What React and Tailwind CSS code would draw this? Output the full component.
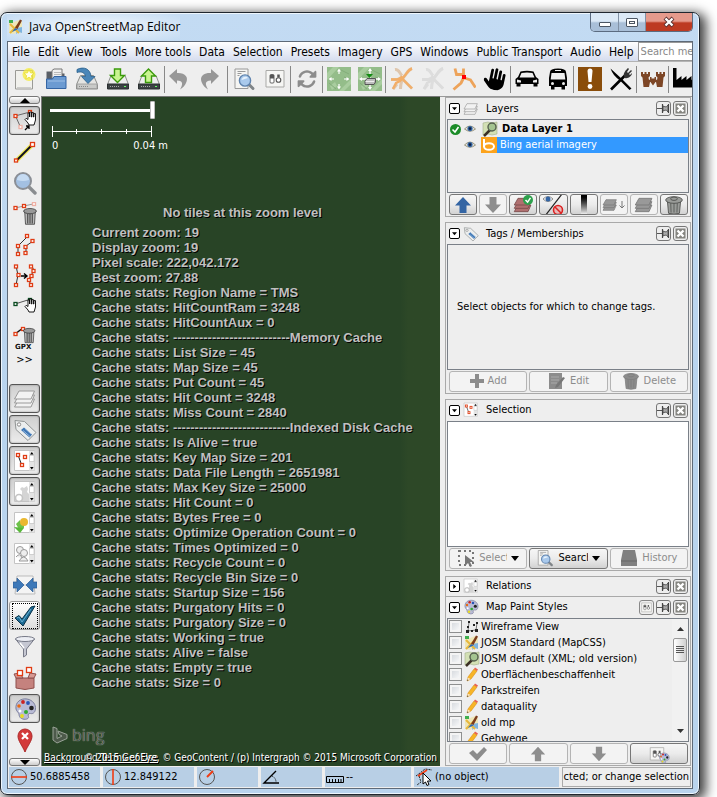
import React, { useState } from "react"
import { FaHand, FaRotate } from "react-icons/fa6"

const Svg = ({ size = 24, box = 24, children, className = "" }) => (
  <svg width={size} height={size} viewBox={`0 0 ${box} ${box}`} fill="none" className={`shrink-0 ${className}`} aria-hidden="true">
    {children}
  </svg>
)

// small red square, used for every map node
const Node = ({ x, y, c = "#e03c14", s = 3 }) => (
  <rect x={x - s / 2} y={y - s / 2} width={s} height={s} fill="#fff" stroke={c} strokeWidth="1.3" />
)

/* ---------- main toolbar icons ---------- */
const Drive = () => (
  <>
    <path d="M5.500 8.500h13l4 9v4.500h-21v-4.500z" fill="#e4e4e2" stroke="#8b8d8a" />
    <path d="M2 17h20v4.500H2z" fill="#c9cac8" stroke="#999" strokeWidth=".8" />
    <path d="M4 19.500h10" stroke="#888" strokeDasharray="1 1" />
  </>
)
const DarkDrive = () => (
  <>
    <path d="M5 8.500h14l3.500 9h-21z" fill="#eee" stroke="#8b8d8a" />
    <path d="M1.500 17h21v5h-21z" fill="#3c4244" stroke="#2b2f30" />
    <path d="M4 19.500h9" stroke="#aaa" strokeDasharray="1 1" />
    <path d="M18 19.500h2" stroke="#6f6" />
  </>
)
const IconNew = () => (
  <Svg>
    <path d="M2.500 3.500h17v18.500h-17z" fill="#f1f1ed" stroke="#9a9a96" />
    <path d="M4 20.500h14" stroke="#ccc" />
    <circle cx="16" cy="7.500" r="6.500" fill="#f6ec3a" opacity=".75" />
    <path d="M16 2.500l1.500 3.300 3.600.4-2.700 2.400.8 3.600-3.200-1.900-3.200 1.900.8-3.600-2.700-2.400 3.600-.4z" fill="#fffef0" stroke="#e8dc2b" strokeWidth=".8" />
  </Svg>
)
const IconOpen = () => (
  <Svg>
    <path d="M2.500 21V4.500h7l1.500 2h9.500V21z" fill="#5a5f66" />
    <path d="M8 12V3.500L10 2h8v10z" fill="#f0f0f0" stroke="#777" />
    <path d="M10 5.500h7M10 7.500h7M10 9.500h7" stroke="#bbb" />
    <path d="M2.500 21.500v-9.500h6l1.500-2.500h12v12z" fill="#6c9bd2" stroke="#3465a4" />
    <path d="M4 14h17" stroke="#9dbfe6" />
  </Svg>
)
const IconSave = () => (
  <Svg>
    <Drive />
    <path d="M2 2.500C9-1 15.500 2 16 9.500h4L13 16.500 6.500 9.500h4C10 6 7 4 2 5.500z" fill="#4a86b8" stroke="#2a5f8c" strokeWidth=".8" />
  </Svg>
)
const IconDownload = () => (
  <Svg>
    <DarkDrive />
    <path d="M8.500 2h6v6.500h4L11.500 15.500 4.500 8.500h4z" fill="#c9f590" stroke="#3b9a0c" strokeWidth="1.400" />
  </Svg>
)
const IconUpload = () => (
  <Svg>
    <DarkDrive />
    <path d="M8.500 15.500h6V9h4L11.500 2 4.500 9h4z" fill="#c9f590" stroke="#3b9a0c" strokeWidth="1.400" />
  </Svg>
)
const IconUndo = () => (
  <Svg><path d="M0 9L8 2v4c8-.5 12 4 9 10-1 2.500-3 4.500-6 6.500 3-5 3.500-9-3-9v3.500z" fill="#979797" /></Svg>
)
const IconRedo = () => (
  <Svg><path d="M19 9L11 2v4C3 5.500-1 10 2 16c1 2.500 3 4.500 6 6.500-3-5-3.500-9 3-9v3.500z" fill="#979797" /></Svg>
)
const IconPageSearch = ({ size = 24 }) => (
  <Svg size={size}>
    <path d="M3 2h13v19.500H3z" fill="#f5f5f3" stroke="#999" />
    <path d="M5.500 4.500h8M5.500 6.500h4M5.500 8.500h2" stroke="#9a9a9a" />
    <path d="M16.500 17l4.500 4.500" stroke="#7f8488" strokeWidth="3" strokeLinecap="round" />
    <circle cx="13" cy="13.500" r="5.600" fill="#a9c9ec" stroke="#5f83ae" strokeWidth="1.400" />
    <path d="M9.500 13c1-4 5-4 6.500-2z" fill="#e6f1fb" />
  </Svg>
)
const IconPrefs = ({ size = 24 }) => (
  <Svg size={size}>
    <path d="M3 3.500h18v16.500H3z" fill="#f6f6f4" stroke="#a9a9a7" />
    <rect x="7" y="7.500" width="4" height="8.500" rx="1" fill="#fff" stroke="#555" strokeWidth=".9" />
    <path d="M7 8h4v3.500H7z" fill="#555" />
    <circle cx="15.500" cy="13" r="2.300" fill="#fff" stroke="#555" strokeWidth="1.100" />
    <path d="M15.500 7.500v3" stroke="#555" strokeWidth="2.500" />
  </Svg>
)
const Tile = () => (
  <>
    <path d="M0 0h24v24H0z" fill="#94bd8a" />
    <path d="M0 6l6-6h6L0 13zM12 24L24 12v5l-7 7zM3 19l5-4 2 4-5 4z" fill="#a9cd9f" />
    <path d="M14 3l8 4M2 16l7 6M17 10l6 2" stroke="#83ad7a" />
  </>
)
const IconTile = () => (
  <Svg>
    <Tile />
    <path d="M12 1.500l-2 3h4zM12 22.500l-2-3h4zM1.500 12l3-2v4zM22.500 12l-3-2v4z" fill="#fff" />
    <path d="M12 4v3M12 17v3M4 12h3M17 12h3" stroke="#fff" strokeWidth="1.200" />
  </Svg>
)
const IconTileDrive = () => (
  <Svg>
    <Tile />
    <path d="M12 1l-2 3h4zM12 23l-2-3h4zM1 12l3-2v4zM23 12l-3-2v4z" fill="#fff" />
    <path d="M12 3v18M3 12h18" stroke="#fff" strokeWidth="1.300" />
    <path d="M7 14l2-2.500h8.500V15L16 17.500H7z" fill="#bdbdbd" stroke="#555" />
    <path d="M7.500 14.500H16" stroke="#eee" />
    <path d="M8 7h7l-3.500 4z" fill="#138a13" />
  </Svg>
)
const IconRoad = ({ c = "#f2ae68", e = "#c98a4c" }) => (
  <Svg>
    <path d="M22 1.500c-3.500 1-5 4.500-7.500 7.500-2.500 3-4 6.500-4 13M1 12.500h6c2.500 0 4-2 5.500-3M13 12.500l9 9M3 22l4-5M5 2.500c4-.5 4 3 7 6" stroke={e} strokeWidth="3" opacity=".4" />
    <path d="M22 1.500c-3.500 1-5 4.500-7.500 7.500-2.500 3-4 6-8.500 7L3 22M1 12.500h6c2.500 0 4-2 5.500-3M13 12.500l9 9" stroke={c} strokeWidth="2.400" />
  </Svg>
)
const IconJunction = () => (
  <Svg>
    <path d="M3 1.500l1.500 6h7V1.500M11.500 7.500l1 3.500 6 2 5 7.500M12 10l-3 6-7.500 6.500" stroke="#eda35a" strokeWidth="2.800" />
    <path d="M10 8h4v4h-4z" fill="#f00" />
  </Svg>
)
const IconCar = () => (
  <Svg>
    <path d="M5.500 4.500Q12 3 18.500 4.500l2.500 5.500 2.500 2v5h-1v2.500h-4V17h-13v2.500h-4V17h-1v-5L3 10z" fill="#000" />
    <path d="M6.500 6q5.500-1 11 0l2 4.500h-15z" fill="#eee" />
    <path d="M2 12.500l4 1v2H2zM22 12.500l-4 1v2h4z" fill="#eee" />
  </Svg>
)
const IconBus = () => (
  <Svg>
    <path d="M4 5q0-3.500 8-3.500T20 5l1 6v8h-2v3.500h-3.500V20h-7v2.500H5V19H3v-8z" fill="#000" />
    <path d="M9 3.500h6" stroke="#eee" />
    <path d="M5.500 6h13l.8 6.500H4.700z" fill="#eee" />
    <circle cx="6.500" cy="16.500" r="1.500" fill="#eee" /><circle cx="17.500" cy="16.500" r="1.500" fill="#eee" />
  </Svg>
)
const IconExclaim = () => (
  <Svg>
    <path d="M0 0h24v24H0z" fill="#8a4d0a" />
    <path d="M9.500 4a2.500 2.500 0 015 0l-1 11h-3z" fill="#fff" />
    <circle cx="12" cy="19.500" r="2.400" fill="#fff" />
  </Svg>
)
const IconFood = () => (
  <Svg>
    <path d="M1.500 1.500L13 12l9.500 9.500-2 1.500-9-9C6 10 3 6 1.500 1.500z" fill="#000" />
    <path d="M2 22.500L16.500 8" stroke="#000" strokeWidth="2.600" />
    <path d="M15 9c-1-3 2-6 4-8l1 1-2 3 1 1 3-3 1 1-3 3 1 1 2-2c0 3-4 6-7 5z" fill="#333" />
  </Svg>
)
const IconCastle = () => (
  <Svg>
    <path d="M0 5h2v2h1.500V5h2v2H7V5h2v4l-1.500 1.500L8 13l1-.5V10h1.500v1.500h3V10H15v2.500l1 .5.500-2.500L15 9V5h2v2h1.500V5h2v2H22V5h2v4l-1.500 1.500-1 9.500h-5.500l-1-5h-.5L12 18.500 9.500 15H9l-1 5H2.500l-1-9.500L0 9z" fill="#7d4626" />
  </Svg>
)
const IconFactory = () => (
  <Svg><path d="M0 1h3.500v12l5-4v4l5-4v4l5-4v4l5-4v11.500H0z" fill="#000" /></Svg>
)

/* ---------- shared shapes ---------- */
const Layers = ({ size = 24, c = "#f2f2f2", e = "#9a9a9a", check }) => (
  <Svg size={size}>
    {[16, 12, 8].map((y) => (
      <path key={y} d={`M6 ${y - 4}h15.500l-3.500 8H1.500z`} fill={c} stroke={e} />
    ))}
    {check && (
      <>
        <circle cx="18" cy="6" r="6" fill="#2da04c" />
        <path d="M15 6l2.500 2.500L21 3.500" stroke="#fff" strokeWidth="1.800" />
      </>
    )}
  </Svg>
)
const Tag = ({ size = 24 }) => (
  <Svg size={size}>
    <path d="M2 2.500l9.500 1L23 14.500l-8 8L3 11.500z" fill="#eceeee" stroke="#909494" />
    <circle cx="6" cy="6.500" r="1.700" fill="#fff" stroke="#888" />
    <path d="M11 9.500l8 7-2.500 3-8.500-7.500z" fill="#3f77b5" />
    <path d="M10 12.500l7 6M12 10.500l6 5.500" stroke="#b6d0ea" strokeWidth=".7" />
  </Svg>
)
const ListBox = ({ size = 24, children }) => (
  <Svg size={size}>
    <path d="M1.500 1.500h20v20h-20z" fill="#fff" stroke="#c4c4c4" />
    <path d="M16 2h5.500v19.500H16z" fill="#e4e4e4" />
    <path d="M16.500 6.500h4.500v6h-4.500z" fill="#fff" stroke="#bbb" strokeWidth=".6" />
    <path d="M17 5.500l1.800-2.500 1.800 2.500zM17 18l1.800 2.500L20.600 18z" fill="#000" />
    {children}
  </Svg>
)
const SelectionIcon = ({ size }) => (
  <ListBox size={size}>
    <path d="M5 6l3.500 9.500" stroke="#222" />
    <Node x={5} y={6} /><Node x={12} y={8} /><Node x={9} y={16} />
  </ListBox>
)
const RelationIcon = ({ size }) => (
  <ListBox size={size}>
    <path d="M2 21v-4l2-1 2-2 3 1v-4l-2-2 2-2 2 1 3-2 1 3-1 3 2 2v7z" fill="#d4d4d4" />
    <circle cx="6" cy="18" r="3.500" fill="#fff" stroke="#c4c4c4" strokeWidth="1.600" />
  </ListBox>
)
const Trash = ({ size = 24, c = "#9a9c99", e = "#4a4c49" }) => (
  <Svg size={size}>
    <path d="M4 7h16l-1.500 15q-6.500 2-13 0z" fill={c} stroke={e} />
    <path d="M8 10l.5 11M12 10v11M16 10l-.5 11" stroke={e} strokeWidth="1.500" opacity=".6" />
    <ellipse cx="12" cy="6" rx="10" ry="4" fill={c} stroke={e} />
    <ellipse cx="12" cy="4.500" rx="4" ry="2" fill={c} stroke={e} />
  </Svg>
)
const Palette = ({ size = 24 }) => (
  <Svg size={size}>
    <path d="M3 12C2 5 8 1 14 2s9 6 8.500 10-3 5-5 4.500-3 1-2 3-3 4-7 2c-3-1.500-2-4-3-5.500S3.500 14 3 12z" fill="#b9bbd6" stroke="#7c7f9c" />
    <circle cx="10" cy="5" r="1.900" fill="#c22" /><circle cx="6" cy="9" r="1.800" fill="#e86a10" />
    <circle cx="15" cy="6" r="1.900" fill="#2a55b8" /><circle cx="18.500" cy="11" r="2.300" fill="#222" />
    <circle cx="9" cy="19" r="1.900" fill="#e8dc20" /><circle cx="13" cy="15" r="2" fill="#3a3" />
    <circle cx="7" cy="14" r="1.500" fill="#fff" />
  </Svg>
)
const Arrow = ({ up, c = "#8e8e8e", size = 20 }) => (
  <Svg size={size} box={20} className={up ? "" : "rotate-180"}>
    <path d="M10 2l8 8.500h-4.500V18h-7v-7.500H2z" fill={c} />
  </Svg>
)
const JosmLogo = ({ size = 16 }) => (
  <Svg size={size} box={16}>
    <path d="M1 2l5 1 5-2 3 2v11l-4-1-4 2-5-1z" fill="#eee6b8" />
    <path d="M1 1h4v3H1z" fill="#3fae4f" />
    <path d="M8 15l1-6 5-1v6l-3-1z" fill="#7db4e0" />
    <path d="M2 5l9 9M2 14L11 5" stroke="#e8b83c" strokeWidth="2" />
    <path d="M7 9l5-8.500 2 1L9.500 10z" fill="#7a3b1c" />
    <path d="M4 13l3-4 2.500 1.500z" fill="#2d6ab5" />
  </Svg>
)
const MapGlass = ({ size = 16 }) => (
  <Svg size={size} box={16}>
    <path d="M1 2l5-1 4 1 5-1v12l-5 1-4-1-5 1z" fill="#d3e0b4" stroke="#a2b08a" strokeWidth=".6" />
    <path d="M8 9L2 15" stroke="#3c3026" strokeWidth="2.500" />
    <circle cx="10" cy="6" r="4" fill="#a4c490" stroke="#55604e" strokeWidth="1.400" />
  </Svg>
)
const Pencil = () => (
  <Svg size={16} box={16}>
    <path d="M3 14l1-4 6-8 3 2-6 8z" fill="#f7b526" stroke="#d98d18" strokeWidth=".6" />
    <path d="M10 2l1-1.500 3 2L13 4z" fill="#e86050" />
    <path d="M3 14l.8-3.500L6.500 12z" fill="#f6e2c0" /><path d="M3 14l.4-1.600 1 .7z" fill="#222" />
  </Svg>
)
const Wireframe = () => (
  <Svg size={16} box={16}>
    <path d="M5 3l-1 9 8-1 1-7" stroke="#777" />
    <path d="M9 5h2v2H9zM2 11h3v3H2zM11 10h3v3h-3zM4 2h2v2H4zM12 3h2v2h-2zM7 11h2v2H7zM3 7h2v2H3z" fill="#222" />
  </Svg>
)
const Eye = () => (
  <Svg size={12} box={12}>
    <path d="M.5 6Q6 0 11.500 6 6 10.500.5 6z" fill="#e8e6dc" stroke="#8f8a70" strokeWidth=".9" />
    <circle cx="6" cy="5.600" r="2.600" fill="#3465a4" /><circle cx="6" cy="5.600" r="1.300" fill="#0d1d3c" />
  </Svg>
)

/* ---------- left side tools ---------- */
const Hand = ({ x = 11, y = 5 }) => (
  <path transform={`translate(${x} ${y})`} d="M3 11L0 7.500 1.200 6.300 3 7.500V1h1.600v4V0h1.700v5h.5V.6h1.600V5h.5V1.600h1.600V8L9 13H4z" fill="#fff" stroke="#000" strokeWidth=".9" />
)
const tools = [
  { name: "Select", on: true, icon: <Svg><path d="M2 7l15-4M3 8l4 9" stroke="#666" /><Node x={2.500} y={7} /><Node x={17} y={3} /><Node x={7.500} y={18} c="#eeb0a4" /><Hand x={12} y={3} /><path d="M12 21l4-4m-3 0h3v3" stroke="#000" strokeWidth="1.300" /></Svg> },
  { name: "Draw", icon: <Svg><path d="M3 21L20 4" stroke="#f0e850" strokeWidth="4.500" /><path d="M3 21L20 4" stroke="#112" strokeWidth="2" /><Node x={3} y={20.500} /><Node x={19.500} y={4.500} s={4} /></Svg> },
  { name: "Zoom", icon: <Svg><path d="M15 15l7 7" stroke="#8a8d90" strokeWidth="3.400" strokeLinecap="round" /><circle cx="10" cy="10" r="8" fill="#a3c0e2" stroke="#8b8f96" strokeWidth="2" /><path d="M4 9a6 6 0 0112 0q-6 2-12 0z" fill="#c6dbf2" /></Svg> },
  { name: "Delete", icon: <Svg><path d="M2 6l18-4" stroke="#999" /><Node x={2.500} y={6} /><Node x={11} y={4} /><Node x={21} y={2} c="#eeb0a4" /><g transform="translate(8 5) scale(.75)"><path d="M5 7h14l-1 16H6z" fill="#bbb" stroke="#333" /><path d="M9 9v13M12 9v13M15 9v13" stroke="#444" strokeWidth="1.500" /><ellipse cx="12" cy="5.500" rx="8.500" ry="3.500" fill="#999" stroke="#333" /></g></Svg> },
  { name: "Parallel", icon: <Svg><path d="M5 21v-8l10-10M13 21v-8l7-5" stroke="#333" /><Node x={5} y={21} /><Node x={5} y={13} /><Node x={14} y={3} /><Node x={12.500} y={20} /><Node x={12.500} y={14} /><Node x={19.500} y={8} /></Svg> },
  { name: "Improve way", icon: <Svg><path d="M3 2l2 9-2 10M19 2l2 5-3 4-2 5 2 6" stroke="#333" /><path d="M8 12h5m-2-2.500l3 2.500-3 2.500" stroke="#000" strokeWidth="1.400" /><Node x={3} y={2.500} /><Node x={5.500} y={11} /><Node x={3} y={21} /><Node x={18} y={2.500} /><Node x={20.500} y={7} /><Node x={18.500} y={12} /><Node x={16} y={16} /><Node x={18} y={21} /></Svg> },
  { name: "Move way", icon: <Svg><path d="M2 9l16-5" stroke="#555" /><Node x={2.500} y={9} c="#0a4a20" /><Node x={17} y={5} c="#0a4a20" /><Hand x={12} y={4} /></Svg> },
  { name: "Erase GPX", icon: <Svg><path d="M2 8l8-6" stroke="#111" strokeWidth="1.500" /><Node x={2.500} y={8} /><Node x={10} y={3} /><g transform="translate(8 1) scale(.68)"><path d="M5 7h14l-1 16H6z" fill="#bbb" stroke="#333" /><path d="M9 9v13M12 9v13M15 9v13" stroke="#444" strokeWidth="1.500" /><ellipse cx="12" cy="5.500" rx="8.500" ry="3.500" fill="#999" stroke="#333" /></g><text x="2" y="23" fontSize="7" fontWeight="bold" fill="#111" fontFamily="DejaVu Sans">GPX</text></Svg> },
]

const toggles = [
  { name: "Layers", on: true, icon: <Layers /> },
  { name: "Tags", on: true, icon: <Tag /> },
  { name: "Selection", on: true, icon: <SelectionIcon /> },
  { name: "Relations", on: true, icon: <RelationIcon /> },
  { name: "Changesets", icon: <ListBox><path d="M3 13l4-4v2h4v6H7v3z" fill="#6fc24a" /><circle cx="11" cy="11" r="4" fill="#eab830" /><path d="M1 16l6 6 4-5z" fill="#58b83a" /></ListBox> },
  { name: "Authors", icon: <ListBox><circle cx="7" cy="8" r="3.500" fill="#eee" stroke="#999" /><circle cx="11" cy="11" r="3.500" fill="#eee" stroke="#999" /><path d="M3 15q4-5 6 1M6 19q5-8 9 0z" fill="#eee" stroke="#999" /></ListBox> },
  { name: "Conflicts", icon: <Svg><path d="M4 3h16l2 18H2z" fill="#f4f4f4" stroke="#bbb" /><path d="M4 12h16" stroke="#ccc" /><path d="M0 9h4V5l7 7-7 7v-4H0zM24 9h-4V5l-7 7 7 7v-4h4z" fill="#3d78b8" stroke="#2b5c94" strokeWidth=".7" /></Svg> },
  { name: "Validator", focus: true, icon: <Svg><path d="M2 14l4-2.500 3 3.500L18 3l4-1L10 22z" fill="#1c6a94" stroke="#0c3349" /><path d="M4 14l2-1 3 5L18 5" stroke="#67aed0" /></Svg> },
  { name: "Filter", icon: <Svg><path d="M2.500 4L10.500 14v8l3-2v-6L21.500 4z" fill="#c5c7d2" stroke="#777a88" /><ellipse cx="12" cy="4" rx="9.500" ry="2.500" fill="#eceef4" stroke="#777a88" /><path d="M7 8l4 5" stroke="#fff" strokeWidth="1.500" /></Svg> },
  { name: "Todo list", icon: <Svg><path d="M3 12h18v10l-9 1.500L3 22z" fill="#c5827e" stroke="#8e4f4c" /><path d="M3 12L1 8l6-1 3 5zM21 12l2-4-6-1-2 5z" fill="#d79a94" stroke="#8e4f4c" /><Node x={7} y={7} s={5} /><Node x={16} y={4} s={5} /></Svg> },
  { name: "Map paint styles", on: true, icon: <Palette /> },
  { name: "Notes", icon: <Svg><path d="M12 24C9 17 5 13 5 8a7 7 0 0114 0c0 5-4 9-7 16z" fill="#d33a3a" stroke="#ad2a2a" /><path d="M9 5l6 6m0-6l-6 6" stroke="#fff" strokeWidth="2.200" /></Svg> },
]

const menus = ["File", "Edit", "View", "Tools", "More tools", "Data", "Selection", "Presets", "Imagery", "GPS", "Windows", "Public Transport", "Audio", "Help"]

const toolbar = [
  [["New", <IconNew />], ["Open", <IconOpen />], ["Save", <IconSave />], ["Download", <IconDownload />], ["Upload", <IconUpload />]],
  [["Undo", <IconUndo />], ["Redo", <IconRedo />]],
  [["Search", <IconPageSearch />], ["Preferences", <IconPrefs />]],
  [["Refresh", <FaRotate size={20} className="text-[#8c8c8c]" />]],
  [["Tiles", <IconTile />], ["Load tiles", <IconTileDrive />]],
  [["Ways", <IconRoad />], ["Disabled ways", <IconRoad c="#dcdcdc" e="#c4c4c4" />], ["Junction", <IconJunction />], ["Pan", <FaHand size={22} className="rotate-12 text-black" />]],
  [["Car", <IconCar />], ["Bus", <IconBus />]],
  [["Warning", <IconExclaim />], ["Food", <IconFood />]],
  [["Castle", <IconCastle />]],
  [["Factory", <IconFactory />]],
]

const stats = [
  "Current zoom: 19", "Display zoom: 19", "Pixel scale: 222,042.172", "Best zoom: 27.88",
  ...[
    "Region Name = TMS", "HitCountRam = 3248", "HitCountAux = 0",
    "---------------------------Memory Cache", "List Size = 45", "Map Size = 45", "Put Count = 45", "Hit Count = 3248", "Miss Count = 2840",
    "---------------------------Indexed Disk Cache", "Is Alive = true", "Key Map Size = 201", "Data File Length = 2651981", "Max Key Size = 25000",
    "Hit Count = 0", "Bytes Free = 0", "Optimize Operation Count = 0", "Times Optimized = 0", "Recycle Count = 0", "Recycle Bin Size = 0",
    "Startup Size = 156", "Purgatory Hits = 0", "Purgatory Size = 0", "Working = true", "Alive = false", "Empty = true", "Size = 0",
  ].map((s) => "Cache stats: " + s),
]

const styles = [
  ["Wireframe View", <Wireframe />],
  ["JOSM Standard (MapCSS)", <JosmLogo />],
  ["JOSM default (XML; old version)", <MapGlass />],
  ["Oberflächenbeschaffenheit", <Pencil />],
  ["Parkstreifen", <Pencil />],
  ["dataquality", <Pencil />],
  ["old mp", <JosmLogo />],
  ["Gehwege", <Pencil />],
]

function SideButton({ item }) {
  return (
    <button
      type="button"
      aria-label={item.name}
      className={`flex h-[29px] w-[31px] shrink-0 items-center justify-center rounded-[3px] border ${
        item.on ? "border-[#555] bg-linear-to-b from-[#cfcfcf] to-[#ececec] shadow-[inset_0_0_2px_#888]" : item.focus ? "border-[#999] bg-linear-to-b from-white to-[#ddd]" : "border-transparent"
      }`}
    >
      {item.focus ? <span className="border border-dotted border-black">{item.icon}</span> : item.icon}
    </button>
  )
}

function ScrollButton({ up }) {
  return (
    <button type="button" aria-label={up ? "Scroll up" : "Scroll down"} className="flex h-2 w-[31px] shrink-0 items-center justify-center rounded-[3px] border border-[#777] bg-linear-to-b from-white to-[#ccc]">
      <svg width="10" height="5" viewBox="0 0 10 5" className={up ? "" : "rotate-180"}><path d="M5 0l5 5H0z" fill="#000" /></svg>
    </button>
  )
}

function Btn({ children, label, off }) {
  return (
    <button
      type="button"
      aria-label={label}
      disabled={off}
      className={`flex h-[21px] min-w-0 flex-1 basis-0 items-center justify-center gap-1 overflow-hidden rounded-[3px] border ${
        off ? "border-[#b4b4b4] bg-[#f3f3f3] text-[#8c8c8c]" : "border-[#777] bg-linear-to-b from-[#f6f6f6] via-[#ebebeb] to-[#d2d2d2]"
      }`}
    >
      {children}
    </button>
  )
}

function Panel({ title, icon, children, buttons, grow, closed, prefs }) {
  return (
    <section className={`flex min-h-0 flex-col border border-[#a9a9a9] px-px ${grow ? "flex-1" : ""} ${closed ? "shrink-0 border-b-0" : ""}`}>
      <header className={`flex shrink-0 items-center pr-px pl-[2px] ${closed ? "h-[19px]" : "h-[21px]"}`}>
        <button type="button" aria-label={`Toggle ${title}`} className="flex size-[11px] items-center justify-center rounded-[2px] border border-black bg-white">
          <svg width="5" height="5" viewBox="0 0 6 6" className={closed ? "-rotate-90" : ""}><path d="M0 1.500h6L3 5z" fill="#000" /></svg>
        </button>
        <span className="mr-[7px] ml-[3px]">{icon}</span>
        <h2 className="flex-1">{title}</h2>
        <div className="flex gap-[2px]">
          {prefs && (
            <button type="button" aria-label="Preferences" className="flex size-[15px] items-center justify-center rounded-[3px] border border-[#888] bg-[#eee]"><IconPrefs size={13} /></button>
          )}
          <button type="button" aria-label={`Undock ${title}`} className="flex size-[15px] items-center justify-center rounded-[3px] border border-[#777] bg-[#eee]">
            <Svg size={13} box={13}><path d="M0 6.500h5" stroke="#555" /><path d="M5.500 2v9M11.500 2v9" stroke="#444" strokeWidth="1.200" /><path d="M6 4l2 .8h1.500L11 3v7L9.500 8.200H8L6 9z" fill="#aaa" stroke="#444" strokeWidth=".8" /></Svg>
          </button>
          <button type="button" aria-label={`Close ${title}`} className="flex size-[15px] items-center justify-center rounded-[3px] border border-[#777] bg-[#eee]">
            <Svg size={11} box={11}><path d="M.5.500h10v10H.5z" fill="#858580" /><path d="M2.500 2.500l6 6m0-6l-6 6" stroke="#fff" strokeWidth="2.400" /></Svg>
          </button>
        </div>
      </header>
      {children}
      {buttons && <div className="flex shrink-0 gap-[2px] p-px pl-[2px]">{buttons}</div>}
    </section>
  )
}

function StatusCell({ children, className }) {
  return <div className={`flex h-5 items-center gap-[2px] overflow-hidden bg-[#b8cfe5] px-px whitespace-nowrap ${className}`}>{children}</div>
}

export default function App() {
  const [checked, setChecked] = useState({})
  const [zoom, setZoom] = useState(100)

  return (
    <div className="flex h-screen min-h-[600px] flex-col overflow-hidden bg-white pt-3 pr-[17px] pb-[2px] font-['DejaVu_Sans_Condensed','DejaVu_Sans',sans-serif] text-[11px] leading-4 text-black">
      <div className="flex min-h-0 flex-1 flex-col rounded-[7px] border border-[#20262e] bg-linear-to-b from-[#c3dbf3] via-[#b9d4ee] to-[#b9d4ee] px-[6px] pb-[5px] shadow-[4px_3px_12px_2px_rgba(0,0,0,0.75),inset_0_0_0_1px_#eef6fd]">
        <div className="flex h-7 shrink-0 items-start justify-between">
          <div className="flex h-7 items-center gap-[5px] bg-radial from-white/80 to-transparent pl-px font-['Open_Sans','Noto_Sans',sans-serif] text-[12px]">
            <JosmLogo />
            <h1>Java OpenStreetMap Editor</h1>
          </div>
          <div className="flex h-[19px] overflow-hidden rounded-b-[5px] border border-t-0 border-[#5b6b80]">
            <button type="button" aria-label="Minimize" className="flex w-7 items-center justify-center border-r border-[#8191a5] bg-linear-to-b from-[#dce9f6] from-45% to-[#a9bfd8] to-55%">
              <span className="mt-1 h-[5px] w-3 rounded-[1px] border border-[#4c5663] bg-white" />
            </button>
            <button type="button" aria-label="Maximize" className="flex w-[27px] items-center justify-center border-r border-[#8191a5] bg-linear-to-b from-[#dce9f6] from-45% to-[#a9bfd8] to-55%">
              <span className="flex h-[9px] w-3 items-center justify-center rounded-[1px] border border-[#4c5663] bg-white"><span className="h-[3px] w-[6px] border border-[#4c5663]" /></span>
            </button>
            <button type="button" aria-label="Close" className="flex w-[46px] items-center justify-center bg-linear-to-b from-[#e59a8c] from-45% to-[#bd3a22] to-55%">
              <Svg size={12} box={12}><path d="M2 2l8 8M10 2l-8 8" stroke="#5a3030" strokeWidth="4" /><path d="M2.500 2.500l7 7M9.500 2.500l-7 7" stroke="#fff" strokeWidth="2.400" /></Svg>
            </button>
          </div>
        </div>

        <div className="flex min-h-0 flex-1 flex-col overflow-hidden border border-[#5e6a78] bg-[#eee]">
          <nav className="flex h-5 shrink-0 items-center gap-2 overflow-hidden border-b border-[#b4b4b4] bg-linear-to-b from-white to-[#d5dcee] pl-1 text-[12px] whitespace-nowrap">
            {menus.map((m) => (
              <button key={m} type="button">{m}</button>
            ))}
            <input type="text" aria-label="Search menu items" placeholder="Search menu items" className="-ml-1 h-[19px] w-[120px] shrink-0 border border-[#999] bg-white px-[2px] text-[11px] placeholder:text-[#888]" />
          </nav>

          <div className="flex h-[34px] shrink-0 items-center overflow-hidden pl-px">
            {toolbar.map((group, i) => (
              <React.Fragment key={i}>
                {i > 0 && <span className="h-[27px] w-px shrink-0 bg-[#888]" />}
                {group.map(([name, icon]) => (
                  <button key={name} type="button" aria-label={name} className="flex h-[30px] w-[31px] shrink-0 items-center justify-center">{icon}</button>
                ))}
              </React.Fragment>
            ))}
          </div>

          <div className="flex min-h-0 flex-1">
            <div className="flex w-[33px] shrink-0 flex-col items-center gap-[2px]">
              <ScrollButton up />
              <div className="flex min-h-0 flex-1 flex-col gap-[2px] overflow-hidden">
                {tools.map((t) => <SideButton key={t.name} item={t} />)}
                <button type="button" className="h-3 shrink-0 leading-3">&gt;&gt;</button>
                <div className="mt-4 flex flex-col gap-[2px]">
                  {toggles.map((t) => <SideButton key={t.name} item={t} />)}
                </div>
              </div>
              <ScrollButton />
            </div>

            <main className="relative flex min-w-0 flex-1 flex-col overflow-hidden border-t border-l border-[#777] bg-linear-to-r from-[#284426] from-90% to-[#2d4827] to-92% text-[#c0c0c0]">
              <div className="flex w-[130px] flex-col pt-1 pl-2 text-white">
                <input
                  type="range"
                  aria-label="Zoom"
                  value={zoom}
                  onChange={(e) => setZoom(e.target.value)}
                  className="h-[19px] w-[105px] appearance-none bg-linear-to-b from-transparent from-42% via-white via-42% to-transparent to-58% bg-no-repeat [&::-webkit-slider-runnable-track]:h-[3px] [&::-webkit-slider-runnable-track]:bg-white [&::-webkit-slider-thumb]:-mt-2 [&::-webkit-slider-thumb]:h-[18px] [&::-webkit-slider-thumb]:w-[5px] [&::-webkit-slider-thumb]:appearance-none [&::-webkit-slider-thumb]:rounded-[1px] [&::-webkit-slider-thumb]:border [&::-webkit-slider-thumb]:border-[#bbb] [&::-webkit-slider-thumb]:bg-white"
                />
                <svg width="104" height="12" viewBox="0 0 104 12" className="mt-[6px]" stroke="#fff"><path d="M2.500 0v11M101.500 0v11M2.500 5.500h99M26.500 3v5M51.500 3v5M76.500 3v5" /></svg>
                <div className="flex justify-between pr-1 pl-[2px]"><span>0</span><span>0.04 m</span></div>
              </div>
              <div className="pt-[51px] pl-[50px] font-['Liberation_Sans',sans-serif] text-[13px] leading-[15px] font-bold [text-shadow:1px_1px_0_#000]">
                <p className="mb-[5px] pl-[71px]">No tiles at this zoom level</p>
                {stats.map((s, i) => <p key={i} className="whitespace-nowrap">{s}</p>)}
              </div>
              <div className="mt-auto flex items-center gap-1 pb-1 pl-[10px]">
                <svg width="16" height="18" viewBox="0 0 16 18"><path d="M1 1l4 1.500v10L10 10 7 8.500 6 5l9 3.500v4L5 17l-4-3z" fill="#4d5a4b" stroke="#9aa398" /></svg>
                <span className="font-['Open_Sans',sans-serif] text-[16px] leading-[22px] text-[#4d5a4b] [text-shadow:0_0_1px_#d8d8d8]">bing</span>
              </div>
              <div className="relative h-4 text-[10px] whitespace-nowrap text-white [text-shadow:1px_1px_0_#000]">
                <a href="#terms" className="absolute left-[2px] underline">Background Terms of Use</a>
                <p className="absolute right-[3px]">© 2015 GeoEye, © GeoContent / (p) Intergraph © 2015 Microsoft Corporation</p>
              </div>
            </main>

            <aside className="flex w-[252px] shrink-0 flex-col gap-[5px] border-t border-[#999] pr-px pl-[5px]">
              <Panel
                title="Layers"
                icon={<Layers size={16} />}
                buttons={
                  <>
                    <Btn label="Move up"><Arrow up c="#3465a4" /></Btn>
                    <Btn label="Move down" off><Arrow /></Btn>
                    <Btn label="Activate"><Layers size={20} c="#b07070" e="#774848" check /></Btn>
                    <Btn label="Show or hide"><Svg size={24}><path d="M21 1L4 23" stroke="#222" strokeWidth="1.200" /><path d="M2 6q5-5 10 0-5 5-10 0z" fill="#fff" stroke="#888" /><circle cx="7" cy="6" r="2.500" fill="#3465a4" /><circle cx="17" cy="17" r="4.500" fill="#e9b8b8" stroke="#d22" strokeWidth="1.600" /><path d="M14 14l6 6" stroke="#d22" strokeWidth="1.500" /></Svg></Btn>
                    <Btn label="Opacity"><span className="h-5 w-[6px] bg-linear-to-b from-black to-white" /></Btn>
                    <Btn label="Merge" off><Layers size={16} c="#999" e="#777" /><Svg size={8} box={8} className="-ml-1"><path d="M4 0v7M1.500 4.500L4 7l2.500-2.500" stroke="#777" /></Svg></Btn>
                    <Btn label="Duplicate" off><Layers size={20} c="#999" e="#777" /></Btn>
                    <Btn label="Delete layer"><Trash size={20} /></Btn>
                  </>
                }
              >
                <ul className="h-[74px] shrink-0 border border-[#7a8088] pt-px">
                  <li className="flex h-4 items-center pl-[2px] font-bold">
                    <Svg size={11} box={11}><circle cx="5.500" cy="5.500" r="5.500" fill="#1c8c28" /><path d="M2.500 5.500L5 8l3.500-5" stroke="#fff" strokeWidth="1.600" /></Svg>
                    <span className="mx-[3px]"><Eye /></span>
                    <span className="flex items-center gap-1 pl-[3px]"><MapGlass />Data Layer 1</span>
                  </li>
                  <li className="flex h-4 items-center pl-4">
                    <Eye />
                    <span className="ml-[5px] flex flex-1 items-center gap-[3px] bg-[#3399ff] text-white">
                      <Svg size={16} box={16}><path d="M0 0h16v16H0z" fill="#fca31c" /><path d="M3 2v8" stroke="#fff" strokeWidth="2" /><ellipse cx="8" cy="9.500" rx="5" ry="3.300" stroke="#fff" strokeWidth="2" /></Svg>
                      Bing aerial imagery
                    </span>
                  </li>
                </ul>
              </Panel>

              <Panel
                title="Tags / Memberships"
                icon={<Tag size={16} />}
                grow
                buttons={
                  <>
                    <Btn off><Svg size={14} box={14}><path d="M5 0h4v5h5v4H9v5H5V9H0V5h5z" fill="#8c8c8c" /></Svg>Add</Btn>
                    <Btn off><Svg size={18} box={18}><path d="M1 1h13v16H1z" fill="#8c8c8c" /><path d="M3 5h8M3 8h8M3 11h6" stroke="#aaa" /><path d="M17 6l-7 9-3 1 1-3 7-8z" fill="#777" /></Svg>Edit</Btn>
                    <Btn off><Trash size={18} c="#8c8c8c" e="#7c7c7c" />Delete</Btn>
                  </>
                }
              >
                <div className="flex min-h-0 flex-1 items-center border border-[#7a8088] pl-[9px]">Select objects for which to change tags.</div>
              </Panel>

              <Panel
                title="Selection"
                icon={<SelectionIcon size={16} />}
                grow
                buttons={
                  <>
                    <Btn off><Svg size={18} box={18}><path d="M2 2h14v14H2z" stroke="#777" strokeDasharray="2 3" strokeWidth="2" /><path d="M8 6v11l3-3 2 4 2-1-2-4h4z" fill="#777" /></Svg><span className="w-7 overflow-hidden text-left">Select</span><svg width="8" height="5" viewBox="0 0 8 5"><path d="M0 0h8L4 5z" fill="#000" /></svg></Btn>
                    <Btn><IconPageSearch size={18} /><span className="w-[30px] overflow-hidden text-left">Search</span><svg width="8" height="5" viewBox="0 0 8 5"><path d="M0 0h8L4 5z" fill="#000" /></svg></Btn>
                    <Btn off><Svg size={18} box={18}><path d="M3 1h12l2 10v6H1v-6z" fill="#808080" /><path d="M1 12h16" stroke="#666" /></Svg>History</Btn>
                  </>
                }
              >
                <div className="min-h-0 flex-1 border border-[#7a8088] bg-white" />
              </Panel>

              <div className="flex min-h-0 flex-1 grow-[1.12] flex-col">
                <Panel title="Relations" icon={<RelationIcon size={16} />} closed />
                <Panel
                  title="Map Paint Styles"
                  icon={<Palette size={16} />}
                  grow
                  prefs
                  buttons={
                    <>
                      <Btn label="Apply" off><Svg size={20} box={20}><path d="M1 9l4-3 4 4 7-7 3 3-10 11z" fill="#8c8c8c" /></Svg></Btn>
                      <Btn label="Style up" off><Arrow up size={18} /></Btn>
                      <Btn label="Style down" off><Arrow size={18} /></Btn>
                      <Btn label="Style preferences"><IconPrefs size={18} /><span className="-ml-3 mt-2"><Palette size={12} /></span></Btn>
                    </>
                  }
                >
                  <div className="flex min-h-0 flex-1 border border-[#7a8088]">
                    <ul className="min-w-0 flex-1 overflow-hidden">
                      {styles.map(([name, icon]) => (
                        <li key={name}>
                          <label className="flex h-4 items-center whitespace-nowrap">
                            <input
                              type="checkbox"
                              checked={!!checked[name]}
                              onChange={() => setChecked({ ...checked, [name]: !checked[name] })}
                              className="mr-[2px] ml-px size-[13px] appearance-none border border-[#8e8f8f] bg-linear-to-br from-[#cfd3d8] to-white shadow-[inset_0_0_0_2px_#f4f4f4] checked:bg-[#3399ff]"
                            />
                            {icon}
                            <span className="ml-[1px]">{name}</span>
                          </label>
                        </li>
                      ))}
                    </ul>
                    <div className="flex w-4 flex-col items-center bg-[#f1f1f1] pt-2 pb-2">
                      <svg width="7" height="4" viewBox="0 0 7 4"><path d="M3.500 0L7 4H0z" fill="#333" /></svg>
                      <div className="mt-[7px] flex h-6 w-[14px] flex-col items-center justify-center gap-px rounded-[2px] border border-[#999] bg-linear-to-r from-white to-[#d0d0d0]">
                        <i className="h-px w-2 bg-[#555]" /><i className="h-px w-2 bg-[#555]" /><i className="h-px w-2 bg-[#555]" /><i className="h-px w-2 bg-[#555]" />
                      </div>
                      <svg width="7" height="4" viewBox="0 0 7 4" className="mt-auto"><path d="M3.500 4L7 0H0z" fill="#333" /></svg>
                    </div>
                  </div>
                </Panel>
              </div>
            </aside>
          </div>

          <footer className="flex h-[22px] shrink-0 items-center gap-[3px] px-px">
            <StatusCell className="w-[91px]"><Svg size={18} box={18}><circle cx="9" cy="9" r="7.500" stroke="#555" /><path d="M1 9h16" stroke="#f03c14" strokeWidth="1.600" /></Svg>50.6885458</StatusCell>
            <StatusCell className="w-[91px]"><Svg size={18} box={18}><circle cx="9" cy="9" r="7.500" stroke="#555" /><path d="M9 1v16" stroke="#f03c14" strokeWidth="1.600" /></Svg>12.849122</StatusCell>
            <StatusCell className="w-[61px]"><Svg size={18} box={18}><circle cx="9" cy="9" r="7.500" stroke="#555" /><path d="M9 9l6-6" stroke="#f03c14" strokeWidth="2" /></Svg></StatusCell>
            <StatusCell className="w-[61px]"><Svg size={18} box={18}><path d="M14 3L2 15h15" stroke="#000" strokeWidth="1.400" /><path d="M10 8q4 2 4 6" stroke="#000" strokeDasharray="1 1" /></Svg></StatusCell>
            <StatusCell className="w-[86px]"><Svg size={18} box={18}><path d="M.5 8.500h17v6H.5zM3.500 14v-3M6.500 14v-3M9.500 14v-3M12.500 14v-3M15 14v-3" stroke="#000" /></Svg>--</StatusCell>
            <StatusCell className="min-w-0 flex-1"><Svg size={18} box={18}><path d="M1 8l4-3 5-4 7 1M4 8l2 6-4 3" stroke="#222" strokeDasharray="2 1" /><path d="M3 8l9-6" stroke="#f03c14" strokeWidth="1.600" /><path d="M8 5v11l2.500-2 1.500 3.500 2-1-1.500-3.500H16z" fill="#fff" stroke="#000" /></Svg>(no object)</StatusCell>
            <div className="flex h-5 w-[129px] shrink-0 items-center justify-end overflow-hidden border border-[#aaa] pr-px whitespace-nowrap">cted; or change selection</div>
          </footer>
        </div>
      </div>
    </div>
  )
}
